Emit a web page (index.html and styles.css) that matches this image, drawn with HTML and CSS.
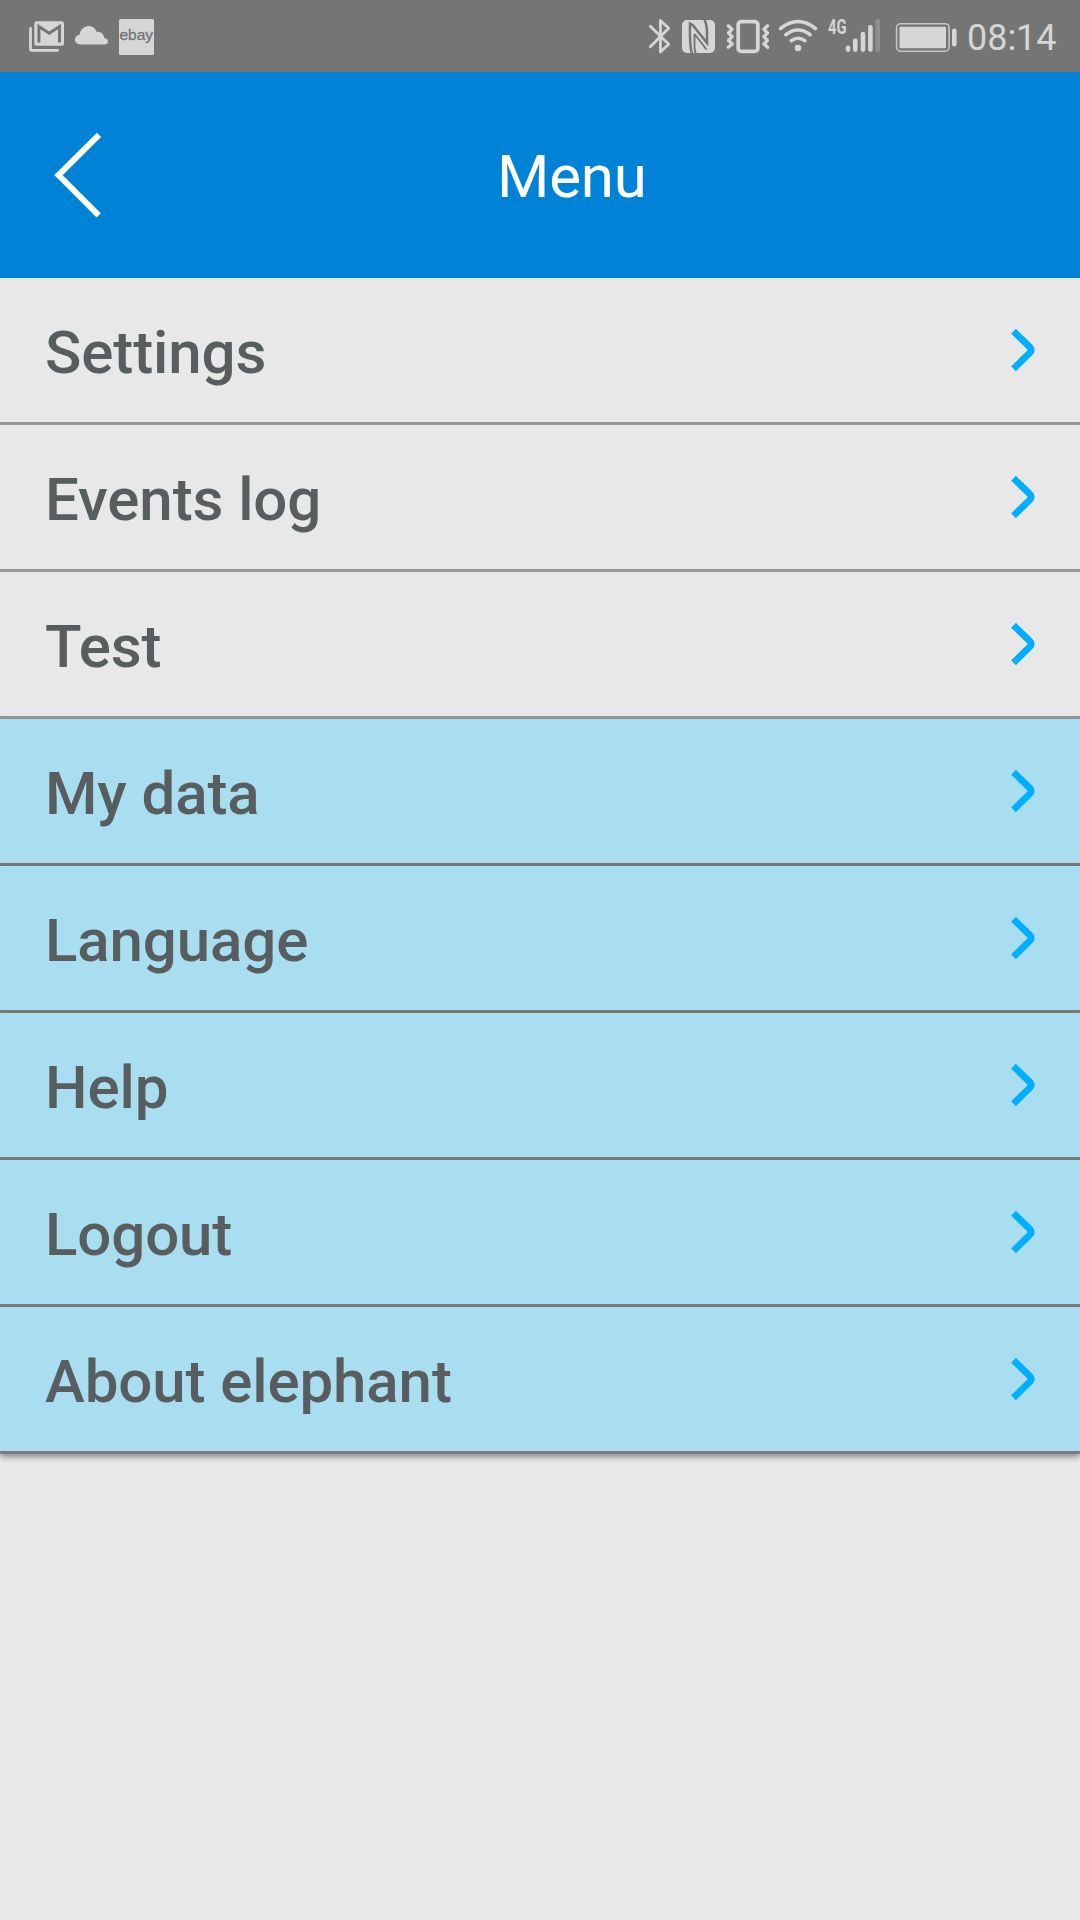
FILE: index.html
```html
<!DOCTYPE html>
<html lang="en">
<head>
<meta charset="utf-8">
<title>Menu</title>
<link rel="stylesheet" href="styles.css">
</head>
<body>
<div class="status">
  <svg class="notifications" width="200" height="72" viewBox="0 0 200 72">
    <path d="M30.500 28.500V49.200Q30.500 50.300 31.600 50.300H57.500" fill="none" stroke="#d6d6d6" stroke-width="2.800" stroke-linecap="round"/>
    <rect x="34.300" y="21.300" width="29.700" height="24.500" rx="2.500" fill="#d6d6d6"/>
    <path d="M38.900 42.500V26.500L49.200 33.300 59.500 26.500V42.500" fill="none" stroke="#757575" stroke-width="3"/>
    <path d="M81 44.400C77.500 44.400 75 42.600 75 39.700 75 37 76.800 35.200 79.600 34.800 80.200 29.800 84 26 88.700 26 92.300 26 95.400 28.400 96.600 31.700 101 31.300 104 34.200 104.300 38.100 106.800 38.500 108 39.900 108 41.400 108 43.200 106.700 44.400 104.600 44.400z" fill="#d6d6d6"/>
    <rect x="119" y="19" width="35" height="36" rx="1.500" fill="#d6d6d6"/>
    <text class="ebay" x="119.500" y="39.800" textLength="33.500" lengthAdjust="spacingAndGlyphs">ebay</text>
  </svg>
  <svg class="system" width="450" height="72" viewBox="630 0 450 72">
    <g fill="none" stroke="#d6d6d6" stroke-linecap="round" stroke-linejoin="round">
      <path d="M650.300 26.300L668.700 44.200 660.400 52V20.500L668.700 28.300 650.300 46.700" stroke-width="2.800"/>
      <rect x="738.200" y="21.600" width="19.600" height="29.800" rx="3" stroke-width="3.800"/>
      <path d="M728.300 25.800L732 29.300 728.500 33 732.200 36.700 728.500 40.400 732.200 44 728.300 47.300M767.600 25.800L764 29.300 767.500 33 763.800 36.700 767.500 40.400 764 44 767.600 47.300" stroke-width="3.300"/>
      <path d="M780.500 28.500Q798 14.500 815.500 28.500M785.800 34.700Q798 25.300 810.200 34.700M791.200 40.700Q798 35.800 804.800 40.700" stroke-width="3.600"/>
    </g>
    <circle cx="798" cy="48" r="3.300" fill="#d6d6d6"/>
    <rect x="682" y="20" width="33" height="33" rx="5" fill="#d6d6d6"/>
    <path d="M692 53.300Q689.500 47 690 23.500L693 25.500 707 43V38Q707.500 25 704.500 19.700" fill="none" stroke="#757575" stroke-width="2.500"/>
    <path d="M694.500 34V46Q694.500 49 695.500 53.300M694.500 34L706.500 49.500" fill="none" stroke="#757575" stroke-width="1.900"/>
    <text class="network" x="828" y="33.500" textLength="18.500" lengthAdjust="spacingAndGlyphs">4G</text>
    <path d="M848 47.800V49.600M855.300 40.800V49.600M863 34V49.600M870.400 27.300V49.600" stroke="#d6d6d6" stroke-width="4.600" stroke-linecap="round"/>
    <path d="M877.700 21.300V49.600" stroke="#909090" stroke-width="4.600" stroke-linecap="round"/>
    <rect x="896.600" y="23.700" width="52.500" height="27.500" rx="4" fill="none" stroke="#c6c6c6" stroke-width="1.600"/>
    <rect x="899.500" y="26.800" width="46.500" height="21.500" rx="1" fill="#d6d6d6"/>
    <rect x="952" y="28.500" width="4.600" height="18" rx="2.300" fill="#d6d6d6"/>
    <text class="clock" x="967" y="50" textLength="89.500" lengthAdjust="spacingAndGlyphs">08:14</text>
  </svg>
</div>
<header class="header">
  <svg class="back" width="200" height="206" viewBox="0 72 200 206">
    <path d="M99 134.800L58.500 175 98.700 215.300" fill="none" stroke="#fff" stroke-width="6"/>
  </svg>
  <h1 class="title">Menu</h1>
</header>
<nav class="menu">
  <a class="row">Settings<svg class="chevron" viewBox="0 0 26 44"><path d="M3.500 3.200L19.500 18.800Q22.700 22 19.500 25.200L3.500 40.800"/></svg></a>
  <a class="row">Events log<svg class="chevron" viewBox="0 0 26 44"><path d="M3.500 3.200L19.500 18.800Q22.700 22 19.500 25.200L3.500 40.800"/></svg></a>
  <a class="row">Test<svg class="chevron" viewBox="0 0 26 44"><path d="M3.500 3.200L19.500 18.800Q22.700 22 19.500 25.200L3.500 40.800"/></svg></a>
  <a class="row blue">My data<svg class="chevron" viewBox="0 0 26 44"><path d="M3.500 3.200L19.500 18.800Q22.700 22 19.500 25.200L3.500 40.800"/></svg></a>
  <a class="row blue">Language<svg class="chevron" viewBox="0 0 26 44"><path d="M3.500 3.200L19.500 18.800Q22.700 22 19.500 25.200L3.500 40.800"/></svg></a>
  <a class="row blue">Help<svg class="chevron" viewBox="0 0 26 44"><path d="M3.500 3.200L19.500 18.800Q22.700 22 19.500 25.200L3.500 40.800"/></svg></a>
  <a class="row blue">Logout<svg class="chevron" viewBox="0 0 26 44"><path d="M3.500 3.200L19.500 18.800Q22.700 22 19.500 25.200L3.500 40.800"/></svg></a>
  <a class="row blue">About elephant<svg class="chevron" viewBox="0 0 26 44"><path d="M3.500 3.200L19.500 18.800Q22.700 22 19.500 25.200L3.500 40.800"/></svg></a>
</nav>
</body>
</html>
```
FILE: styles.css
```css
* { box-sizing: border-box; }
body {
  margin: 0;
  min-height: 1920px;
  background: #e8e8e8;
  font-family: Roboto, sans-serif;
}
.status {
  display: flex;
  justify-content: space-between;
  height: 72px;
  background: #757575;
}
.ebay { font: 14px "Liberation Sans", sans-serif; fill: #757575; stroke: #757575; stroke-width: .3px; }
.network { font: 700 20.5px Roboto, sans-serif; fill: #d6d6d6; }
.clock { font: 37px Roboto, sans-serif; fill: #d6d6d6; }
.header {
  display: flex;
  align-items: center;
  height: 206px;
  background: #0082d7;
}
.title {
  margin: 0;
  padding: 4px 0 0 297px;
  font-size: 60px;
  font-weight: 400;
  line-height: 70px;
  letter-spacing: -.2px;
  color: #fff;
}
.row {
  display: flex;
  align-items: center;
  justify-content: space-between;
  height: 147px;
  padding: 5px 44px 0 45px;
  border-bottom: 3px solid #98989d;
  font-size: 60px;
  font-weight: 500;
  line-height: 70px;
  letter-spacing: -.1px;
  color: #585e60;
}
.blue {
  background: #a9def0;
  border-bottom-color: #7c7c7e;
  box-shadow: 0 3px 6px rgba(0, 0, 0, .4);
}
.chevron {
  width: 26px;
  height: 44px;
  margin-bottom: 5px;
  fill: none;
  stroke: #00aeff;
  stroke-width: 6.8px;
}
```
